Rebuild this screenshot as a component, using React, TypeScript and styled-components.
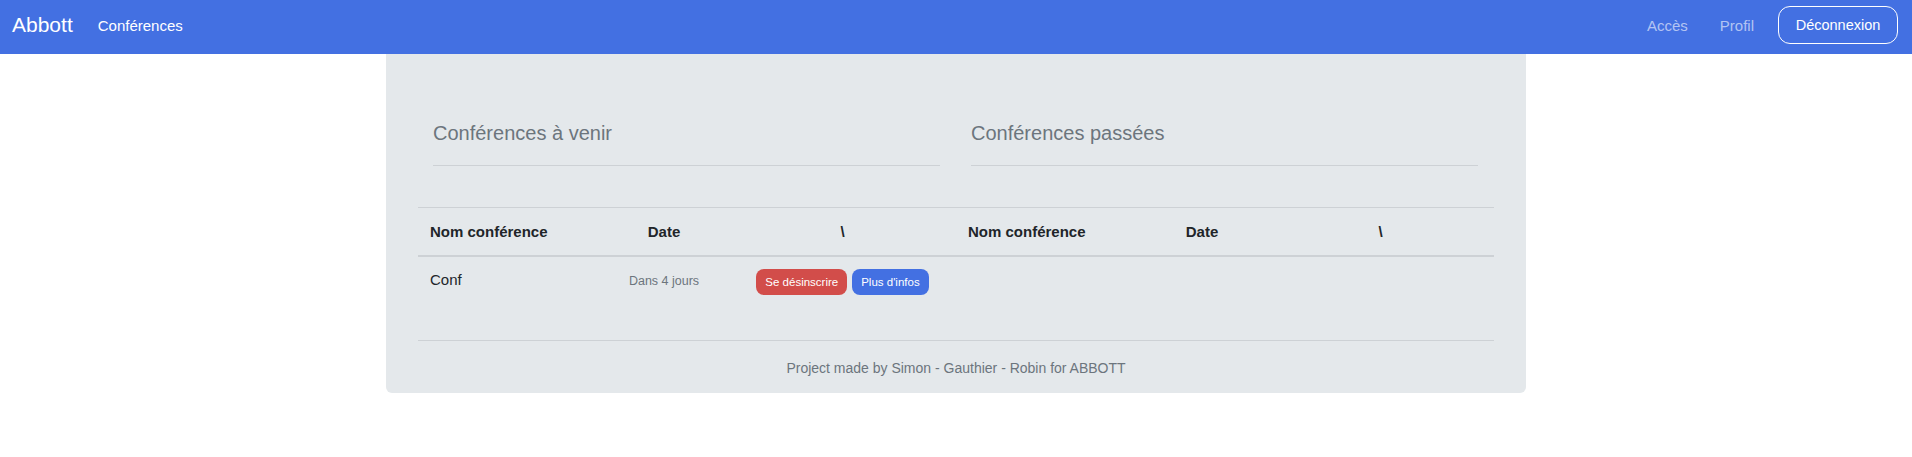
import React from 'react';
import styled, { createGlobalStyle } from 'styled-components';

const GlobalStyle = createGlobalStyle`
  body {
    margin: 0;
    background: #ffffff;
    font-family: "Liberation Sans", Arial, sans-serif;
    color: #212529;
  }
`;

const blue = '#4370e2';
const muted = '#6c757d';
const rule = '#cdd1d5';

const Navbar = styled.nav`
  display: flex;
  align-items: center;
  height: 54px;
  box-sizing: border-box;
  padding: 6px 14px 10px 12px;
  background: ${blue};
`;

const Brand = styled.span`
  font-size: 21px;
  color: #ffffff;
  margin-right: 9px;
`;

const NavLink = styled.a<{ $dim?: boolean }>`
  font-size: 15px;
  padding: 0 16px;
  color: ${(p) => (p.$dim ? 'rgba(255, 255, 255, 0.6)' : '#ffffff')};
  text-decoration: none;
`;

const Spacer = styled.div`
  flex: 1;
`;

const LogoutButton = styled.button`
  height: 38px;
  width: 120px;
  margin-left: 8px;
  border: 1px solid #ffffff;
  border-radius: 12px;
  background: transparent;
  color: #ffffff;
  font-family: inherit;
  font-size: 14.5px;
  padding: 0;
`;

const Card = styled.main`
  width: 1140px;
  margin: 0 auto;
  box-sizing: border-box;
  padding: 67px 32px 15px;
  background: #e4e8eb;
  border-radius: 0 0 6px 6px;
`;

const TwoCols = styled.div`
  display: grid;
  grid-template-columns: 1fr 1fr;
`;

const TitleCol = styled.div`
  padding: 0 16px 0 15px;
`;

const Title = styled.h2`
  margin: 0;
  font-size: 20px;
  font-weight: 400;
  line-height: 24px;
  color: ${muted};
  padding-bottom: 20px;
  border-bottom: 1px solid ${rule};
`;

const Tables = styled.div`
  display: grid;
  grid-template-columns: 1fr 1fr;
  margin-top: 41px;
`;

const Table = styled.table`
  width: 100%;
  table-layout: fixed;
  border-collapse: collapse;
`;

const Th = styled.th<{ $align?: string }>`
  padding: 12px;
  font-size: 15px;
  font-weight: 700;
  line-height: 23px;
  color: #212529;
  text-align: ${(p) => p.$align || 'left'};
  border-top: 1px solid ${rule};
  border-bottom: 2px solid ${rule};
`;

const Td = styled.td<{ $align?: string }>`
  padding: 12px;
  font-size: 15px;
  line-height: 22px;
  text-align: ${(p) => p.$align || 'left'};
  vertical-align: top;
  white-space: nowrap;
`;

const DateText = styled.small`
  font-size: 12.5px;
  line-height: 24px;
  color: ${muted};
`;

const Actions = styled.div`
  display: inline-flex;
  gap: 5px;
`;

const SmallButton = styled.button<{ $variant: 'danger' | 'info' }>`
  height: 26px;
  padding: 0 9px;
  border: none;
  border-radius: 8px;
  background: ${(p) => (p.$variant === 'danger' ? '#d24d4a' : blue)};
  color: #ffffff;
  font-family: inherit;
  font-size: 11.5px;
`;

const Footer = styled.footer`
  margin-top: 33px;
  border-top: 1px solid ${rule};
  padding-top: 17px;
  text-align: center;
  font-size: 14px;
  line-height: 20px;
  color: ${muted};
`;

type Conference = { name: string; when: string };

const upcoming: Conference[] = [{ name: 'Conf', when: 'Dans 4 jours' }];
const past: Conference[] = [];

const ConfTable = ({ rows, upcomingList }: { rows: Conference[]; upcomingList?: boolean }) => (
  <Table>
    <colgroup>
      <col style={{ width: 181 }} />
      <col style={{ width: 130 }} />
      <col />
    </colgroup>
    <thead>
      <tr>
        <Th>Nom conférence</Th>
        <Th $align="center">Date</Th>
        <Th $align="center">\</Th>
      </tr>
    </thead>
    <tbody>
      {rows.map((r) => (
        <tr key={r.name}>
          <Td>{r.name}</Td>
          <Td $align="center">
            <DateText>{r.when}</DateText>
          </Td>
          <Td $align="center">
            <Actions>
              {upcomingList && <SmallButton $variant="danger">Se désinscrire</SmallButton>}
              <SmallButton $variant="info">Plus d'infos</SmallButton>
            </Actions>
          </Td>
        </tr>
      ))}
    </tbody>
  </Table>
);

export default function App() {
  return (
    <>
      <GlobalStyle />
      <Navbar>
        <Brand>Abbott</Brand>
        <NavLink>Conférences</NavLink>
        <Spacer />
        <NavLink $dim>Accès</NavLink>
        <NavLink $dim>Profil</NavLink>
        <LogoutButton>Déconnexion</LogoutButton>
      </Navbar>
      <Card>
        <TwoCols>
          <TitleCol>
            <Title>Conférences à venir</Title>
          </TitleCol>
          <TitleCol>
            <Title>Conférences passées</Title>
          </TitleCol>
        </TwoCols>
        <Tables>
          <ConfTable rows={upcoming} upcomingList />
          <ConfTable rows={past} />
        </Tables>
        <Footer>Project made by Simon - Gauthier - Robin for ABBOTT</Footer>
      </Card>
    </>
  );
}
